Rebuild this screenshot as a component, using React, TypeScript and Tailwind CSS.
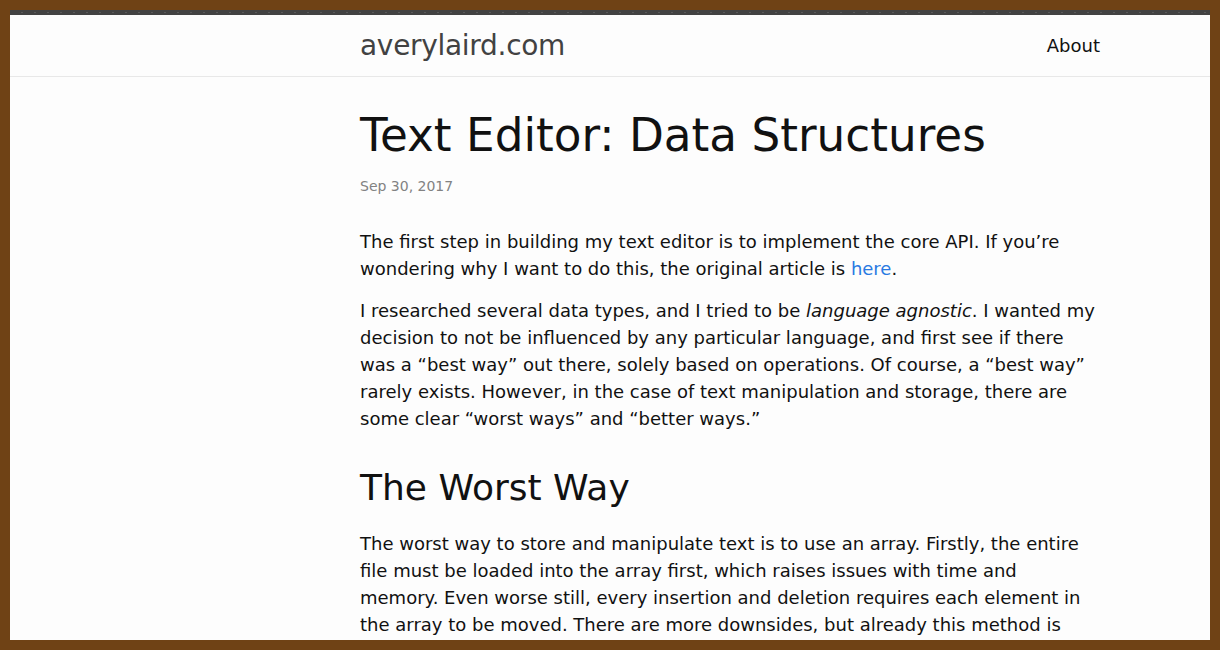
import React from 'react';

const Header: React.FC = () => (
  <header className="border-b border-[#e8e8e8]">
    <div className="h-[5px] bg-[#424242] bg-[repeating-linear-gradient(90deg,transparent_0px,transparent_11px,#5a5a5a_11px,#5a5a5a_13px)] bg-[length:100%_1px] bg-[position:0_2px] bg-no-repeat"></div>
    <div className="ml-[350px] w-[740px] h-[61px] flex items-center justify-between">
      <a className="text-[28px] text-[#424242] tracking-[-0.3px]">averylaird.com</a>
      <a className="text-[18px] text-[#111]">About</a>
    </div>
  </header>
);

const App: React.FC = () => {
  return (
    <div className="h-[650px] p-[10px] bg-[#6f4215] font-['DejaVu_Sans',sans-serif]">
      <div className="h-full overflow-hidden bg-[#fdfdfd] text-[#111]">
        <Header />
        <main className="ml-[350px] w-[740px] pt-[32px]">
          <h1 className="text-[45.3px] leading-[1.2]">Text Editor: Data Structures</h1>
          <p className="mt-[13px] text-[14px] text-[#828282]">Sep 30, 2017</p>
          <div className="mt-[31px] text-[18px] leading-[27px]">
            <p>
              The first step in building my text editor is to implement the core API. If you’re wondering why I
              want to do this, the original article is <a className="text-[#2a7ae2]">here</a>.
            </p>
            <p className="mt-[15px]">
              I researched several data types, and I tried to be <em>language agnostic</em>. I wanted my
              decision to not be influenced by any particular language, and first see if there was a “best way”
              out there, solely based on operations. Of course, a “best way” rarely exists. However, in the case
              of text manipulation and storage, there are some clear “worst ways” and “better ways.”
            </p>
            <h2 className="mt-[34px] text-[36px] leading-[1.2]">The Worst Way</h2>
            <p className="mt-[20px]">
              The worst way to store and manipulate text is to use an array. Firstly, the entire file must be
              loaded into the array first, which raises issues with time and memory. Even worse still, every
              insertion and deletion requires each element in the array to be moved. There are more downsides,
              but already this method is clearly not the way to go.
            </p>
          </div>
        </main>
      </div>
    </div>
  );
};

export default App;
